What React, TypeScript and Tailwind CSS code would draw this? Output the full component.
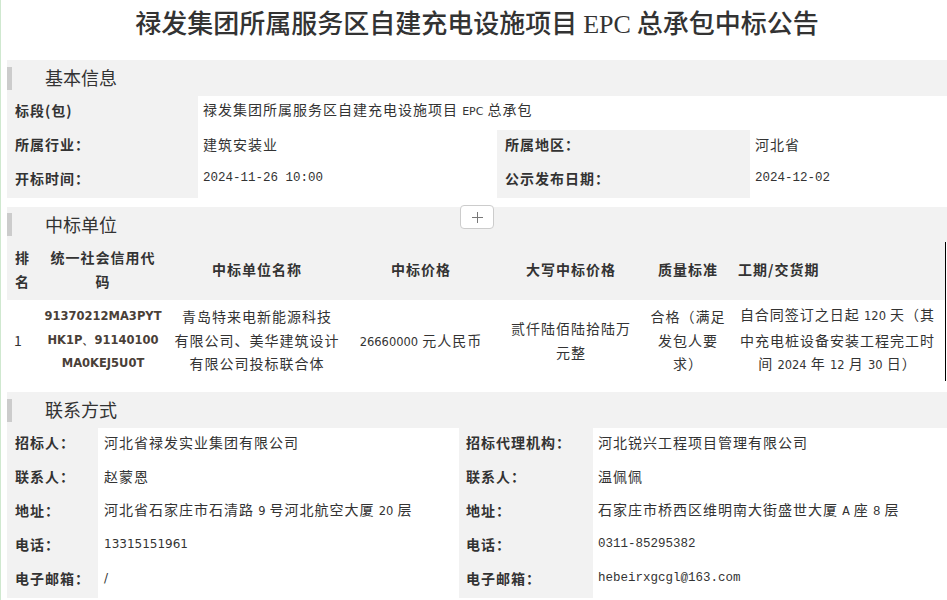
const latin = "font-['DejaVu_Sans',sans-serif]";
const mono = "font-['Liberation_Mono',monospace]";

function SectionHead({ title, h = "h-[36px]", children }: { title: string; h?: string; children?: React.ReactNode }) {
  return (
    <div className={`relative ${h} bg-[#f2f2f2] flex items-center`}>
      <div className="w-[5px] h-[23px] bg-[#cccccc]" />
      <span className="ml-[33px] pb-[2px] text-[18px] leading-none text-[#333]">{title}</span>
      {children}
    </div>
  );
}

function Label({ children, pl = "pl-[8px]" }: { children: React.ReactNode; pl?: string }) {
  return (
    <div className={`bg-[#f2f2f2] ${pl} pb-[6px] flex items-center font-bold tracking-[1px] h-[34px]`}>
      <span>{children}</span>
    </div>
  );
}

function Value({ children, className = "" }: { children: React.ReactNode; className?: string }) {
  return (
    <div className={`bg-white flex items-center pb-[6px] tracking-[1px] h-[34px] whitespace-nowrap ${className}`}>
      <span>{children}</span>
    </div>
  );
}

export default function App() {
  const contacts = [
    ["招标人：", "河北省禄发实业集团有限公司", "招标代理机构：", "河北锐兴工程项目管理有限公司"],
    ["联系人：", "赵蒙恩", "联系人：", "温佩佩"],
  ];

  return (
    <div className="min-h-screen bg-white border-l border-[#cfe8cf] pl-[6px] text-[#333] text-[14px] font-['Noto_Sans_CJK_SC',sans-serif]">
      {/* 标题 */}
      <h1 className="h-[50px] mb-[10px] pb-[4px] flex items-center justify-center text-[26px] font-medium text-[#333] whitespace-nowrap">
        <span>
          禄发集团所属服务区自建充电设施项目&nbsp;<span className="font-['Liberation_Serif',serif]">EPC</span>&nbsp;总承包中标公告
        </span>
      </h1>

      {/* 基本信息 */}
      <SectionHead title="基本信息" />
      <div className="grid grid-cols-[191px_299px_253px_1fr]">
        <Label>标段(包)</Label>
        <Value className="col-span-3 pl-[5px]">
          禄发集团所属服务区自建充电设施项目 <span className={`${latin} text-[11px] tracking-normal`}>EPC</span> 总承包
        </Value>
        <Label>所属行业：</Label>
        <Value className="pl-[5px]">建筑安装业</Value>
        <Label>所属地区：</Label>
        <Value className="pl-[5px]">河北省</Value>
        <Label>开标时间：</Label>
        <Value className={`pl-[5px] ${mono} text-[12.5px] tracking-normal`}>2024-11-26 10:00</Value>
        <Label>公示发布日期：</Label>
        <Value className={`pl-[5px] ${mono} text-[12.5px] tracking-normal`}>2024-12-02</Value>
      </div>

      {/* 中标单位 */}
      <div className="mt-[9px]">
        <SectionHead title="中标单位" h="h-[35px]">
          <button className="absolute left-1/2 -translate-x-1/2 top-[-2px] w-[34px] h-[24px] rounded-[4px] border border-[#cccccc] bg-white flex items-center justify-center">
            <svg width="11" height="11" viewBox="0 0 11 11">
              <path d="M5.5 0v11M0 5.5h11" stroke="#777" strokeWidth="1" />
            </svg>
          </button>
        </SectionHead>
      </div>
      <div className="w-[939px] border-r border-black grid grid-cols-[31px_130px_178px_150px_150px_84px_1fr] tracking-[1px]">
        {[
          <>排<br />名</>,
          <>统一社会信用代<br />码</>,
          <>中标单位名称</>,
          <>中标价格</>,
          <>大写中标价格</>,
          <>质量标准</>,
        ].map((t, i) => (
          <div key={i} className="h-[58px] pb-[4px] bg-[#f2f2f2] flex items-center justify-center text-center font-bold leading-[24px]">
            <span>{t}</span>
          </div>
        ))}
        <div className="h-[58px] pb-[4px] bg-[#f2f2f2] flex items-center pl-[8px] font-bold">
          <span>工期/交货期</span>
        </div>

        <div className="h-[81px] flex items-center pl-[7px]">1</div>
        <div className={`h-[81px] flex items-center justify-center text-center ${latin} font-semibold text-[11.5px] tracking-normal leading-[23.5px] text-[#4a4038]`}>
          <div>91370212MA3PYT<br />HK1P、91140100<br />MA0KEJ5U0T</div>
        </div>
        <div className="h-[81px] flex items-center justify-center text-center leading-[23.5px] whitespace-nowrap">
          <div>青岛特来电新能源科技<br />有限公司、美华建筑设计<br />有限公司投标联合体</div>
        </div>
        <div className="h-[81px] flex items-center justify-center text-center whitespace-nowrap">
          <span>
            <span className={`${latin} text-[11.5px] tracking-normal`}>26660000</span> 元人民币
          </span>
        </div>
        <div className="h-[81px] flex items-center justify-center text-center leading-[23.5px]">
          <div>贰仟陆佰陆拾陆万<br />元整</div>
        </div>
        <div className="h-[81px] flex items-center justify-center text-center leading-[23.5px] whitespace-nowrap">
          <div>合格（满足<br />发包人要<br />求）</div>
        </div>
        <div className="h-[81px] flex items-center justify-center text-center leading-[23.5px] whitespace-nowrap">
          <div>
            自合同签订之日起 <span className={`${latin} text-[11.5px] tracking-normal`}>120</span> 天（其
            <br />
            中充电桩设备安装工程完工时
            <br />
            间 <span className={`${latin} text-[11.5px] tracking-normal`}>2024</span> 年{" "}
            <span className={`${latin} text-[11.5px] tracking-normal`}>12</span> 月{" "}
            <span className={`${latin} text-[11.5px] tracking-normal`}>30</span> 日）
          </div>
        </div>
      </div>

      {/* 联系方式 */}
      <div className="mt-[11px]">
        <SectionHead title="联系方式" />
      </div>
      <div className="grid grid-cols-[91px_361px_134px_1fr]">
        {contacts.map((r, i) => (
          <div key={i} className="contents">
            <Label>{r[0]}</Label>
            <Value className="pl-[6px]">{r[1]}</Value>
            <Label pl="pl-[7px]">{r[2]}</Label>
            <Value className="pl-[5px]">{r[3]}</Value>
          </div>
        ))}
        <Label>地址：</Label>
        <Value className="pl-[6px]">
          河北省石家庄市石清路 <span className={`${latin} text-[11.5px] tracking-normal`}>9</span> 号河北航空大厦{" "}
          <span className={`${latin} text-[11.5px] tracking-normal`}>20</span> 层
        </Value>
        <Label pl="pl-[7px]">地址：</Label>
        <Value className="pl-[5px]">
          石家庄市桥西区维明南大街盛世大厦 <span className={`${mono} text-[12.5px] tracking-normal`}>A</span> 座{" "}
          <span className={`${mono} text-[12.5px] tracking-normal`}>8</span> 层
        </Value>
        <Label>电话：</Label>
        <Value className={`pl-[6px] ${latin} text-[12px] tracking-normal`}>13315151961</Value>
        <Label pl="pl-[7px]">电话：</Label>
        <Value className={`pl-[5px] ${mono} text-[12.5px] tracking-normal`}>0311-85295382</Value>
        <Label>电子邮箱：</Label>
        <Value className={`pl-[6px] ${latin} text-[12px] tracking-normal`}>/</Value>
        <Label pl="pl-[7px]">电子邮箱：</Label>
        <Value className={`pl-[5px] ${mono} text-[12.5px] tracking-normal`}>hebeirxgcgl@163.com</Value>
      </div>
    </div>
  );
}
